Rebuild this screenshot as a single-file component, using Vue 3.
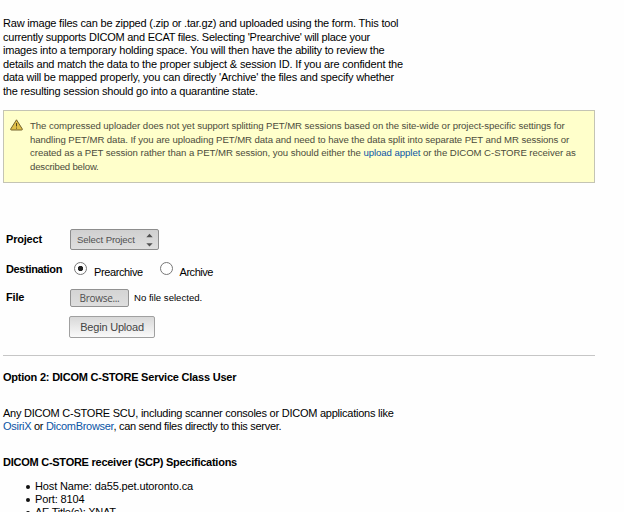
<script setup>
const intro = [
  "Raw image files can be zipped (.zip or .tar.gz) and uploaded using the form. This tool",
  "currently supports DICOM and ECAT files. Selecting 'Prearchive' will place your",
  'images into a temporary holding space. You will then have the ability to review the',
  'details and match the data to the proper subject & session ID. If you are confident the',
  "data will be mapped properly, you can directly 'Archive' the files and specify whether",
  'the resulting session should go into a quarantine state.'
]
</script>

<template>
  <main class="page">
    <p class="intro"><span v-for="line in intro" :key="line" class="line">{{ line }}</span></p>

    <section class="notice">
      <svg class="warn" width="13" height="12" viewBox="0 0 13 12">
        <path d="M6.5 .8 L12.3 10 Q12.6 11 11.6 11 H1.4 Q.4 11 .7 10 Z" fill="#e0c048" stroke="#75622c" stroke-width="1" stroke-linejoin="round" />
        <path d="M6.5 4 V7.4 M6.5 8.6 V9.6" stroke="#54441a" stroke-width="1" />
      </svg>
      <p class="notice-text">
        <span class="line">The compressed uploader does not yet support splitting PET/MR sessions based on the site-wide or project-specific settings for</span>
        <span class="line">handling PET/MR data. If you are uploading PET/MR data and need to have the data split into separate PET and MR sessions or</span>
        <span class="line">created as a PET session rather than a PET/MR session, you should either the <a class="link">upload applet</a> or the DICOM C-STORE receiver as</span>
        <span class="line">described below.</span>
      </p>
    </section>

    <form class="form">
      <div class="row project">
        <b class="label">Project</b>
        <span class="select">Select Project
          <svg class="arrows" width="7" height="14" viewBox="0 0 7 14"><path d="M.3 4.2 L3.5 .8 L6.7 4.2 Z M.3 10.2 L3.5 13.6 L6.7 10.2 Z" fill="#505050" /></svg>
        </span>
      </div>
      <div class="row destination">
        <b class="label">Destination</b>
        <i class="radio on"></i><span class="opt first">Prearchive</span>
        <i class="radio"></i><span class="opt second">Archive</span>
      </div>
      <div class="row file">
        <b class="label">File</b>
        <span class="browse">Browse...</span><span class="nofile">No file selected.</span>
      </div>
      <div class="submit">Begin Upload</div>
    </form>

    <h3 class="h-option">Option 2: DICOM C-STORE Service Class User</h3>
    <p class="store">
      <span class="line">Any DICOM C-STORE SCU, including scanner consoles or DICOM applications like</span>
      <span class="line"><a class="link">OsiriX</a> or <a class="link">DicomBrowser</a>, can send files directly to this server.</span>
    </p>
    <h3 class="h-spec">DICOM C-STORE receiver (SCP) Specifications</h3>
    <ul class="specs">
      <li>Host Name: da55.pet.utoronto.ca</li>
      <li>Port: 8104</li>
      <li>AE Title(s): XNAT</li>
    </ul>
  </main>
</template>

<style>
html, body { margin: 0; overflow: hidden; background: #fefefe; }
</style>

<style scoped>
.page { box-sizing: border-box; width: 624px; height: 512px; padding: 17px 0 0 3px; overflow: hidden; font: 11px/13.6px "Liberation Sans", Arial, sans-serif; color: #000; }
p, h3, ul { margin: 0; padding: 0; }
.line { display: block; width: max-content; white-space: nowrap; }
.link { color: #0b55a5; }
.intro { height: 93px; letter-spacing: -.2px; }
.intro .line:nth-child(2) { letter-spacing: -.24px; }
.intro .line:nth-child(4) { letter-spacing: -.175px; }
.notice { box-sizing: border-box; display: flex; width: 592px; height: 73px; padding: 8px 0 0 6px; border: 1px solid #c4c4b4; background: #ffffcb; }
.warn { display: block; flex: none; margin-right: 7px; }
.notice-text { color: #4c4c3c; font-size: 9.6px; letter-spacing: -.052px; }
.notice-text .line:nth-child(2) { letter-spacing: -.063px; }
.notice-text .line:last-child { letter-spacing: -.18px; }
.form { width: 592px; margin-top: 46px; height: 127px; box-sizing: border-box; border-bottom: 1px solid #c6c6c6; }
.row { display: flex; padding-left: 3px; }
.label { width: 64px; flex: none; letter-spacing: -.2px; }
.project { height: 30px; align-items: flex-start; }
.project .label { padding-top: 4px; }
.select { box-sizing: border-box; display: flex; justify-content: space-between; align-items: center; width: 89px; height: 21px; padding: 0 5px 0 6px; border: 1px solid #8d8d8d; border-radius: 2px; background: linear-gradient(#d0d0d0, #dedede); color: #505050; font-size: 9.6px; letter-spacing: -.1px; }
.destination { height: 30px; }
.destination .label { padding-top: 4px; letter-spacing: -.35px; }
.radio { box-sizing: border-box; flex: none; width: 13px; height: 13px; margin: 3px 7px 0 4px; border: 1px solid #777; border-radius: 50%; background: #fff; }
.on { background: radial-gradient(circle, #222 0 2.3px, #fff 3px); }
.opt { padding-top: 7px; letter-spacing: -.38px; }
.first { width: 62px; }
.second { margin-left: -.5px; letter-spacing: -.45px; }
.file { height: 27px; }
.file .label { padding-top: 2px; }
.browse { box-sizing: border-box; width: 59px; height: 18px; border: 1px solid #929292; border-radius: 2px; background: linear-gradient(#d4d4d4, #dedede); color: #505050; font: 10px/16px "Open Sans", sans-serif; letter-spacing: -.3px; text-align: center; }
.nofile { padding: 2px 0 0 5px; font-size: 9.6px; }
.submit { box-sizing: border-box; width: 86px; height: 22px; margin-left: 66px; border: 1px solid #a0a0a0; border-radius: 2px; background: linear-gradient(#d8d8d8, #fafafa); color: #444; line-height: 20px; letter-spacing: -.2px; text-align: center; }
h3 { font-size: 11px; line-height: 14px; letter-spacing: -.22px; }
.h-option { margin-top: 14px; }
.store { margin-top: 22.6px; letter-spacing: -.24px; }
.store .line:last-child { letter-spacing: -.29px; }
.h-spec { margin-top: 21.4px; letter-spacing: -.255px; }
.specs { margin-top: 11px; list-style: none; letter-spacing: -.13px; }
.specs li { display: flex; align-items: center; height: 13.2px; }
.specs li:last-child { letter-spacing: -.28px; }
.specs li::before { content: ""; width: 4px; height: 4px; margin: 0 5px 0 23px; border-radius: 50%; background: #111; }
.specs li:last-child::before { margin-top: -1px; }
</style>
